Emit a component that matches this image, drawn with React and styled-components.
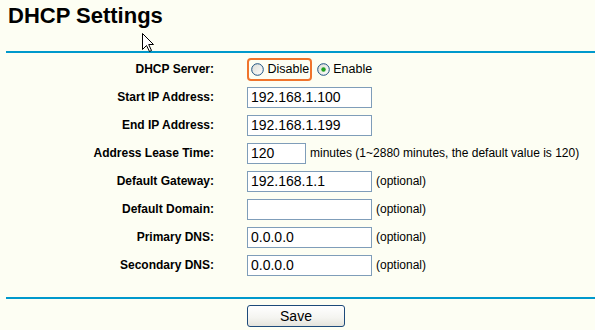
import React from "react";
import styled, { createGlobalStyle } from "styled-components";

const GlobalStyle = createGlobalStyle`
  html, body {
    margin: 0;
    padding: 0;
    background: #fdfef3;
  }
  body {
    font-family: "Liberation Sans", Arial, sans-serif;
    color: #000;
  }
`;

const Page = styled.div`
  position: relative;
  width: 595px;
  height: 330px;
  overflow: hidden;
  background: #fdfef3;
`;

const Title = styled.h1`
  margin: 0;
  height: 51px;
  padding: 3px 0 0 8px;
  box-sizing: border-box;
  font-size: 22px;
  line-height: 26px;
  font-weight: bold;
`;

const Rule = styled.div`
  height: 2px;
  margin-left: 6px;
  background: #0099cc;
`;

const Form = styled.div`
  padding-top: 2px;
`;

const Row = styled.div`
  display: grid;
  grid-template-columns: 214px 1fr;
  column-gap: 33px;
  align-items: center;
  height: 28px;
`;

const Label = styled.div`
  text-align: right;
  font-size: 12px;
  font-weight: bold;
  white-space: nowrap;
`;

const Field = styled.div`
  display: flex;
  align-items: center;
  gap: 4px;
  white-space: nowrap;
`;

const TextInput = styled.input`
  width: ${(p) => p.$w || 125}px;
  height: 21px;
  box-sizing: border-box;
  margin: 0;
  padding: 0 3px;
  border: 1px solid #7f9db9;
  background: #fff;
  font-family: "Liberation Sans", Arial, sans-serif;
  font-size: 14px;
  color: #000;
  outline: none;
`;

const Note = styled.span`
  font-size: 12px;
`;

const RadioGroup = styled.div`
  display: flex;
  align-items: center;
  gap: 5px;
  margin-left: -0.5px;
`;

const RadioOption = styled.label`
  display: flex;
  align-items: center;
  gap: ${(p) => (p.$focused ? 4 : 3)}px;
  height: ${(p) => (p.$focused ? 23 : "auto")}px;
  box-sizing: border-box;
  padding: ${(p) => (p.$focused ? "0 1px 0 2px" : "0")};
  border: ${(p) => (p.$focused ? "2px solid #f0742c" : "none")};
  border-radius: 4px;
  font-size: 12.5px;
`;

const Footer = styled.div`
  display: flex;
  justify-content: center;
  padding-top: 6px;
  padding-right: 3px;
`;

const SaveButton = styled.button`
  width: 98px;
  height: 22px;
  border: 1px solid #1d4a7a;
  border-radius: 3px;
  background: linear-gradient(#ffffff, #f4f4f0 60%, #e4e3dc);
  font-family: "Liberation Sans", Arial, sans-serif;
  font-size: 14px;
  color: #000;
  padding: 0;
`;

const Cursor = styled.svg`
  position: absolute;
  left: 142px;
  top: 33px;
`;

const Radio = ({ checked }) => (
  <svg width="13" height="13" viewBox="0 0 13 13">
    <defs>
      <linearGradient id={checked ? "rgOn" : "rgOff"} x1="0" y1="0" x2="1" y2="1">
        <stop offset="0" stopColor="#dcdcd5" />
        <stop offset="1" stopColor="#ffffff" />
      </linearGradient>
    </defs>
    <circle
      cx="6.5"
      cy="6.5"
      r="5.8"
      fill={`url(#${checked ? "rgOn" : "rgOff"})`}
      stroke="#1c5180"
      strokeWidth="1"
    />
    {checked && <circle cx="6.5" cy="6.5" r="2.2" fill="#21a121" />}
  </svg>
);

const rows = [
  { label: "Start IP Address:", value: "192.168.1.100" },
  { label: "End IP Address:", value: "192.168.1.199" },
  {
    label: "Address Lease Time:",
    value: "120",
    w: 59,
    note: "minutes (1~2880 minutes, the default value is 120)",
  },
  { label: "Default Gateway:", value: "192.168.1.1", note: "(optional)" },
  { label: "Default Domain:", value: "", note: "(optional)" },
  { label: "Primary DNS:", value: "0.0.0.0", note: "(optional)" },
  { label: "Secondary DNS:", value: "0.0.0.0", note: "(optional)" },
];

export default function App() {
  return (
    <Page>
      <GlobalStyle />
      <Title>DHCP Settings</Title>
      <Rule />
      <Form>
        <Row>
          <Label>DHCP Server:</Label>
          <RadioGroup>
            <RadioOption $focused>
              <Radio />
              Disable
            </RadioOption>
            <RadioOption>
              <Radio checked />
              Enable
            </RadioOption>
          </RadioGroup>
        </Row>
        {rows.map((r) => (
          <Row key={r.label}>
            <Label>{r.label}</Label>
            <Field>
              <TextInput $w={r.w} defaultValue={r.value} />
              {r.note && <Note>{r.note}</Note>}
            </Field>
          </Row>
        ))}
      </Form>
      <Rule style={{ marginTop: 18 }} />
      <Footer>
        <SaveButton>Save</SaveButton>
      </Footer>
      <Cursor width="13" height="20" viewBox="0 0 13 20">
        <path
          d="M0.5 0.5 L0.5 16.5 L4.5 12.5 L7.5 18.5 L9.5 17.5 L6.7 11.5 L11.5 11.5 Z"
          fill="#fff"
          stroke="#000"
          strokeWidth="1"
          strokeLinejoin="miter"
        />
      </Cursor>
    </Page>
  );
}
